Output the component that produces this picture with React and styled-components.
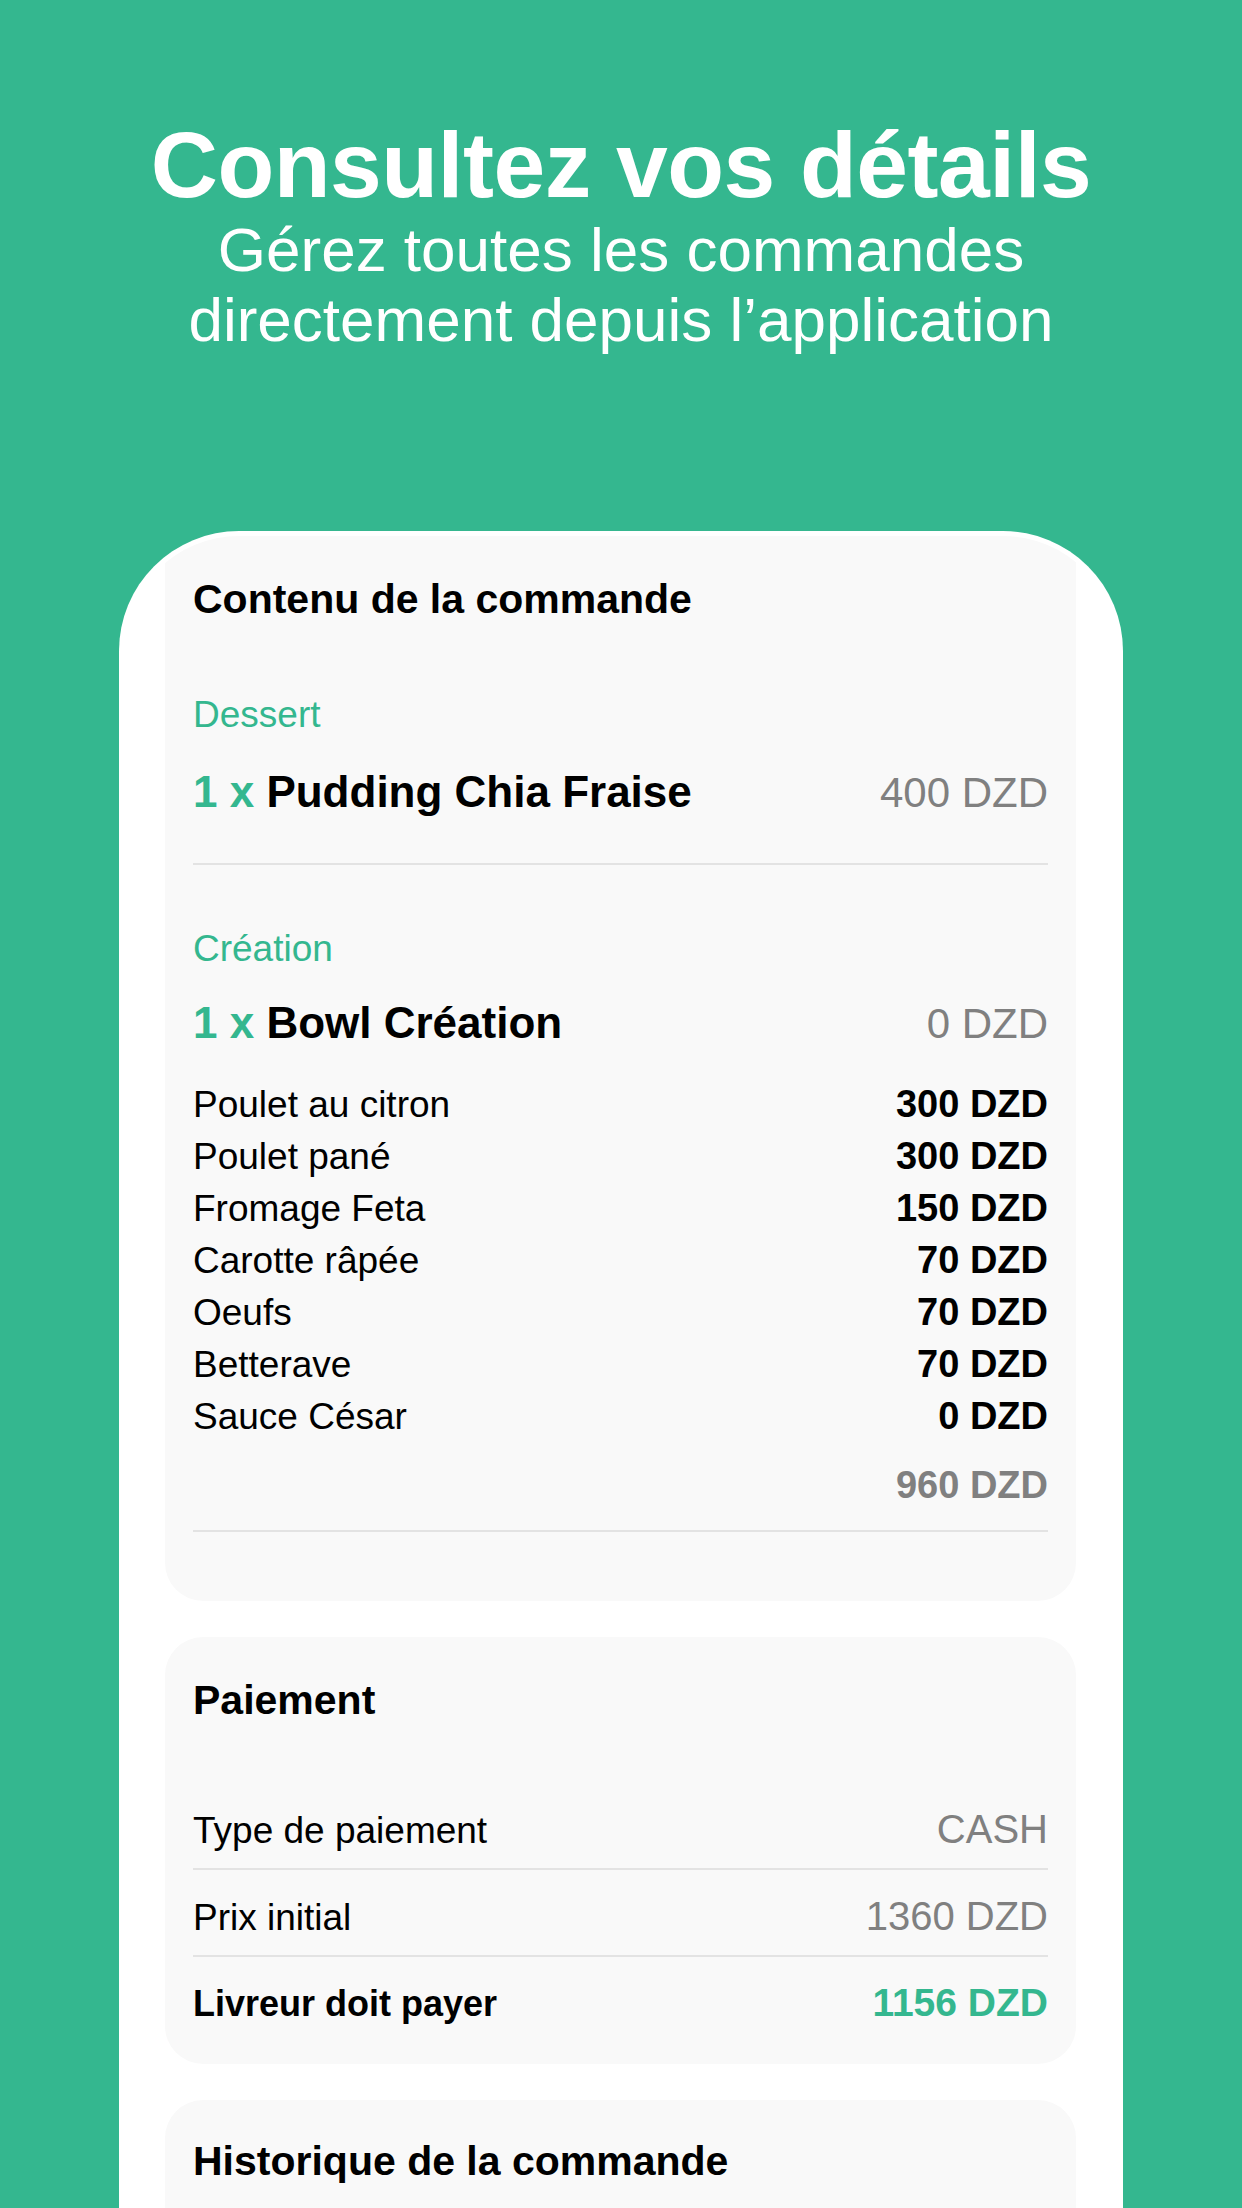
import React from "react";
import styled, { createGlobalStyle } from "styled-components";

const GREEN = "#34b78f";
const GRAY = "#808080";
const LINE = "#e3e3e3";
const CARD = "#f9f9f9";

const GlobalStyle = createGlobalStyle`
  html, body {
    margin: 0;
    padding: 0;
    background: ${GREEN};
  }
  body {
    font-family: "Liberation Sans", Arial, Helvetica, sans-serif;
    color: #000;
  }
  * { box-sizing: border-box; }
`;

const Page = styled.div`
  width: 1242px;
  height: 2208px;
  overflow: hidden;
  background: ${GREEN};
  padding-top: 115px;
  display: flex;
  flex-direction: column;
  align-items: center;
`;

const Title = styled.h1`
  margin: 0;
  font-size: 93px;
  line-height: 100px;
  font-weight: 700;
  letter-spacing: -0.5px;
  color: #fff;
  text-align: center;
`;

const Subtitle = styled.p`
  margin: 0;
  font-size: 62px;
  line-height: 70px;
  font-weight: 400;
  color: #fff;
  text-align: center;
`;

const Phone = styled.div`
  margin-top: 176px;
  width: 1004px;
  flex: 1;
  background: #fff;
  border-radius: 120px 120px 0 0;
  padding: 5px 5px 0;
`;

const Screen = styled.div`
  height: 100%;
  background: #fff;
  border-radius: 115px 115px 0 0;
  overflow: hidden;
  padding: 0 42px 0 41px;
  display: flex;
  flex-direction: column;
  gap: 36px;
`;

const Card = styled.section`
  background: ${CARD};
  border-radius: ${(p) => (p.$flatTop ? "0 0 38px 38px" : "38px")};
  padding: ${(p) => p.$pad};
`;

const CardTitle = styled.h2`
  margin: 0;
  font-size: 41px;
  line-height: 48px;
  font-weight: 700;
`;

const Category = styled.div`
  margin-top: ${(p) => p.$top}px;
  font-size: 37px;
  line-height: 44px;
  color: ${GREEN};
`;

const ProductRow = styled.div`
  margin-top: ${(p) => p.$top}px;
  display: flex;
  justify-content: space-between;
  align-items: baseline;
  height: 50px;
  line-height: 50px;
`;

const ProductName = styled.span`
  font-size: 44px;
  font-weight: 700;
`;

const Qty = styled.span`
  color: ${GREEN};
`;

const ProductPrice = styled.span`
  font-size: 42px;
  color: ${GRAY};
`;

const Divider = styled.div`
  margin-top: ${(p) => p.$top}px;
  height: 2px;
  background: ${LINE};
`;

const IngredientList = styled.ul`
  list-style: none;
  margin: 30px 0 0;
  padding: 0;
`;

const Ingredient = styled.li`
  display: flex;
  justify-content: space-between;
  align-items: baseline;
  height: 52px;
  line-height: 52px;
  font-size: 37px;
`;

const IngredientPrice = styled.span`
  font-size: 38px;
  font-weight: 700;
`;

const Subtotal = styled.div`
  margin-top: 21px;
  text-align: right;
  font-size: 38px;
  line-height: 44px;
  font-weight: 700;
  color: ${GRAY};
`;

const PayList = styled.div`
  margin-top: 59px;
`;

const PayRow = styled.div`
  display: flex;
  justify-content: space-between;
  align-items: baseline;
  height: ${(p) => (p.$last ? "85px" : "87px")};
  padding-top: 24px;
  line-height: 44px;
  border-bottom: ${(p) => (p.$last ? "none" : `2px solid ${LINE}`)};
`;

const PayLabel = styled.span`
  font-size: ${(p) => (p.$strong ? "36px" : "37px")};
  font-weight: ${(p) => (p.$strong ? 700 : 400)};
`;

const PayValue = styled.span`
  font-size: ${(p) => (p.$strong ? "39px" : "40px")};
  font-weight: ${(p) => (p.$strong ? 700 : 400)};
  color: ${(p) => (p.$strong ? GREEN : GRAY)};
`;

const ingredients = [
  ["Poulet au citron", "300 DZD"],
  ["Poulet pané", "300 DZD"],
  ["Fromage Feta", "150 DZD"],
  ["Carotte râpée", "70 DZD"],
  ["Oeufs", "70 DZD"],
  ["Betterave", "70 DZD"],
  ["Sauce César", "0 DZD"],
];

const payments = [
  { label: "Type de paiement", value: "CASH" },
  { label: "Prix initial", value: "1360 DZD" },
  { label: "Livreur doit payer", value: "1156 DZD", strong: true },
];

export default function App() {
  return (
    <>
      <GlobalStyle />
      <Page>
        <Title>Consultez vos détails</Title>
        <Subtitle>
          Gérez toutes les commandes
          <br />
          directement depuis l’application
        </Subtitle>
        <Phone>
          <Screen>
            <Card $flatTop $pad="39px 28px 69px">
              <CardTitle>Contenu de la commande</CardTitle>

              <Category $top={70}>Dessert</Category>
              <ProductRow $top={30}>
                <ProductName>
                  <Qty>1 x</Qty> Pudding Chia Fraise
                </ProductName>
                <ProductPrice>400 DZD</ProductPrice>
              </ProductRow>
              <Divider $top={46} />

              <Category $top={62}>Création</Category>
              <ProductRow $top={27}>
                <ProductName>
                  <Qty>1 x</Qty> Bowl Création
                </ProductName>
                <ProductPrice>0 DZD</ProductPrice>
              </ProductRow>
              <IngredientList>
                {ingredients.map(([name, price]) => (
                  <Ingredient key={name}>
                    <span>{name}</span>
                    <IngredientPrice>{price}</IngredientPrice>
                  </Ingredient>
                ))}
              </IngredientList>
              <Subtotal>960 DZD</Subtotal>
              <Divider $top={23} />
            </Card>

            <Card $pad="39px 28px 22px">
              <CardTitle>Paiement</CardTitle>
              <PayList>
                {payments.map((p, i) => (
                  <PayRow key={p.label} $last={i === payments.length - 1}>
                    <PayLabel $strong={p.strong}>{p.label}</PayLabel>
                    <PayValue $strong={p.strong}>{p.value}</PayValue>
                  </PayRow>
                ))}
              </PayList>
            </Card>

            <Card $pad="37px 28px 120px">
              <CardTitle>Historique de la commande</CardTitle>
            </Card>
          </Screen>
        </Phone>
      </Page>
    </>
  );
}
